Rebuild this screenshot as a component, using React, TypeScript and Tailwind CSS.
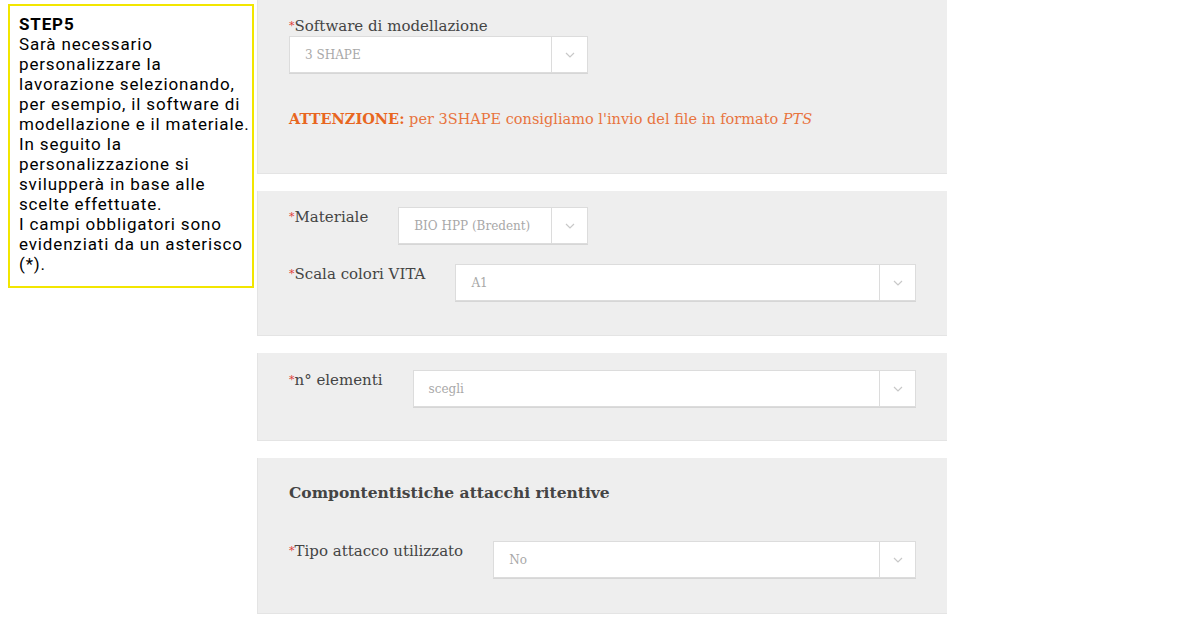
import React from "react";

const slab = { fontFamily: '"DejaVu Serif", "Liberation Serif", serif' };

const Chevron = () => (
  <svg width="10" height="6" viewBox="0 0 10 6" fill="none">
    <path d="M1 1l4 4 4-4" stroke="#c8c8c8" strokeWidth="1.2" />
  </svg>
);

const Select = ({ value, className = "" }: { value: string; className?: string }) => (
  <div
    className={`flex h-[37px] items-stretch border border-[#dcdcdc] bg-white shadow-[0_1px_0_#d6d6d6] ${className}`}
  >
    <div className="flex flex-1 items-center pl-[15px] text-[12px] text-[#a8a8a8]">{value}</div>
    <div className="flex w-[36px] items-center justify-center border-l border-[#dcdcdc]">
      <Chevron />
    </div>
  </div>
);

const Label = ({ text }: { text: string }) => (
  <div className="whitespace-nowrap text-[15px] leading-[20px] text-[#444]">
    <span className="text-[11px] align-top text-[#e0403a]">*</span>
    {text}
  </div>
);

const Row = ({ label, value, selectClass }: { label: string; value: string; selectClass: string }) => (
  <div className="flex items-start gap-[30px]">
    <Label text={label} />
    <Select value={value} className={selectClass} />
  </div>
);

const Panel = ({ children, className = "" }: { children: React.ReactNode; className?: string }) => (
  <div className={`border-l border-b border-[#e4e4e4] bg-[#eeeeee] px-[31px] ${className}`}>{children}</div>
);

export default function App() {
  return (
    <div className="flex h-[633px] w-[1200px] bg-white" style={slab}>
      <div className="w-[257px] shrink-0 pl-[8px] pt-[4px]">
        <div
          className="w-[246px] border-2 border-[#f2e600] pl-[9px] pr-[2px] pt-[8px] pb-[12px] text-[17px] leading-[20px] tracking-[0.85px] text-black"
          style={{ fontFamily: 'Roboto, "Liberation Sans", sans-serif' }}
        >
          <div className="font-bold">STEP5</div>
          <div>
            Sarà necessario personalizzare la lavorazione selezionando, per esempio, il software di modellazione e il
            materiale.
          </div>
          <div>In seguito la personalizzazione si svilupperà in base alle scelte effettuate.</div>
          <div>I campi obbligatori sono evidenziati da un asterisco (*).</div>
        </div>
      </div>

      <div className="flex w-[690px] flex-col gap-[17px]">
        <Panel className="h-[174px] pt-[16px]">
          <Label text="Software di modellazione" />
          <Select value="3 SHAPE" className="w-[299px]" />
          <div className="mt-[35px] text-[14.5px] text-[#e8743e]">
            <span className="font-bold text-[#e8661f]">ATTENZIONE:</span> per 3SHAPE consigliamo l'invio del file in
            formato <span className="italic">PTS</span>
          </div>
        </Panel>

        <Panel className="flex h-[145px] flex-col gap-[20px] pt-[16px]">
          <Row label="Materiale" value="BIO HPP (Bredent)" selectClass="w-[190px]" />
          <Row label="Scala colori VITA" value="A1" selectClass="flex-1" />
        </Panel>

        <Panel className="h-[88px] pt-[17px]">
          <Row label="n° elementi" value="scegli" selectClass="flex-1" />
        </Panel>

        <Panel className="h-[156px] pt-[23px]">
          <div className="text-[15.5px] font-bold text-[#444]">Compontentistiche attacchi ritentive</div>
          <div className="mt-[37px]">
            <Row label="Tipo attacco utilizzato" value="No" selectClass="flex-1" />
          </div>
        </Panel>
      </div>
    </div>
  );
}
